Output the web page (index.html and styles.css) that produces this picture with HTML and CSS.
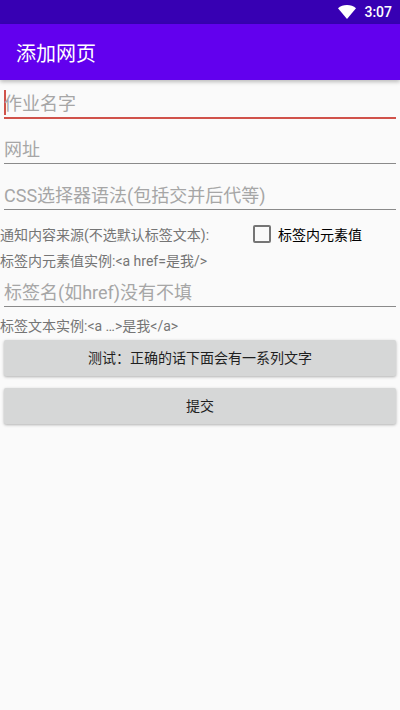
FILE: index.html
```html
<!DOCTYPE html>
<html>
	<head>
		<meta charset="UTF-8">
		<title>添加网页</title>
		<link rel="stylesheet" href="styles.css">
	</head>
	<body>
		<div class="status-bar">
			<svg class="wifi" width="18" height="14" viewBox="0 0 18 14">
				<path d="M0 3.2C2.4 1.2 5.5 0 9 0s6.6 1.2 9 3.2L9 14z" fill="#fff"/>
			</svg>
			<span class="clock">3:07</span>
		</div>
		<div class="toolbar">添加网页</div>
		<div class="form">
			<div class="field first"><span class="caret"></span><span class="hint">作业名字</span></div>
			<div class="field"><span class="hint">网址</span></div>
			<div class="field"><span class="hint">CSS选择器语法(包括交并后代等)</span></div>
			<div class="source-row">
				<span class="label">通知内容来源(不选默认标签文本):</span>
				<span class="check"><span class="box"></span>标签内元素值</span>
			</div>
			<div class="label example">标签内元素值实例:&lt;a href=是我/&gt;</div>
			<div class="field attr"><span class="hint">标签名(如href)没有不填</span></div>
			<div class="label example-text">标签文本实例:&lt;a …&gt;是我&lt;/a&gt;</div>
			<button class="btn">测试：正确的话下面会有一系列文字</button>
			<button class="btn">提交</button>
		</div>
	</body>
</html>
```

FILE: styles.css
```css
* {
	margin: 0;
	padding: 0;
	box-sizing: border-box;
}
html, body {
	height: 100%;
}
body {
	background: #fafafa;
	font-family: Roboto, "Noto Sans CJK SC", sans-serif;
	overflow: hidden;
}
.status-bar {
	display: flex;
	align-items: center;
	justify-content: flex-end;
	height: 24px;
	padding-right: 8px;
	background: #3700b3;
	color: #fff;
	font-size: 14px;
	font-weight: 500;
}
.wifi {
	margin-right: 8px;
}
.toolbar {
	position: relative;
	display: flex;
	align-items: center;
	height: 56px;
	padding-left: 16px;
	background: #6200ee;
	color: #fff;
	font-size: 20px;
	box-shadow: 0 2px 4px rgba(0, 0, 0, 0.25);
}
.form {
	display: flex;
	flex-direction: column;
}
.field {
	display: flex;
	align-items: flex-end;
	height: 37px;
	margin: 9px 4px 0;
	border-bottom: 1px solid #8a8a8a;
	font-size: 18px;
	line-height: 26px;
	color: #a6a6a6;
}
.field.first {
	margin-top: 2px;
	margin-bottom: -1px;
	border-bottom: 2px solid #d0524a;
}
.caret {
	width: 2px;
	height: 25px;
	margin-right: -2px;
	margin-bottom: 2px;
	background: #d0524a;
}
.source-row {
	display: flex;
	align-items: center;
	height: 32px;
	margin-top: 8px;
}
.label {
	font-size: 14px;
	color: #757575;
}
.source-row .label {
	width: 253px;
}
.check {
	display: flex;
	align-items: center;
	font-size: 14px;
	color: #000;
}
.box {
	width: 18px;
	height: 18px;
	margin-right: 7px;
	border: 2px solid #757575;
	border-radius: 2px;
}
.example {
	height: 20px;
	margin-top: 1px;
	line-height: 20px;
}
.field.attr {
	margin-top: 0;
	height: 36px;
}
.example-text {
	height: 20px;
	margin-top: 9px;
	line-height: 20px;
}
.btn {
	height: 36px;
	margin: 4px 4px 8px;
	padding-bottom: 2px;
	border: 0;
	border-radius: 2px;
	background: #d6d7d7;
	color: #1f1f1f;
	font-family: inherit;
	font-size: 14px;
	box-shadow: 0 1px 3px rgba(0, 0, 0, 0.3);
}
```
